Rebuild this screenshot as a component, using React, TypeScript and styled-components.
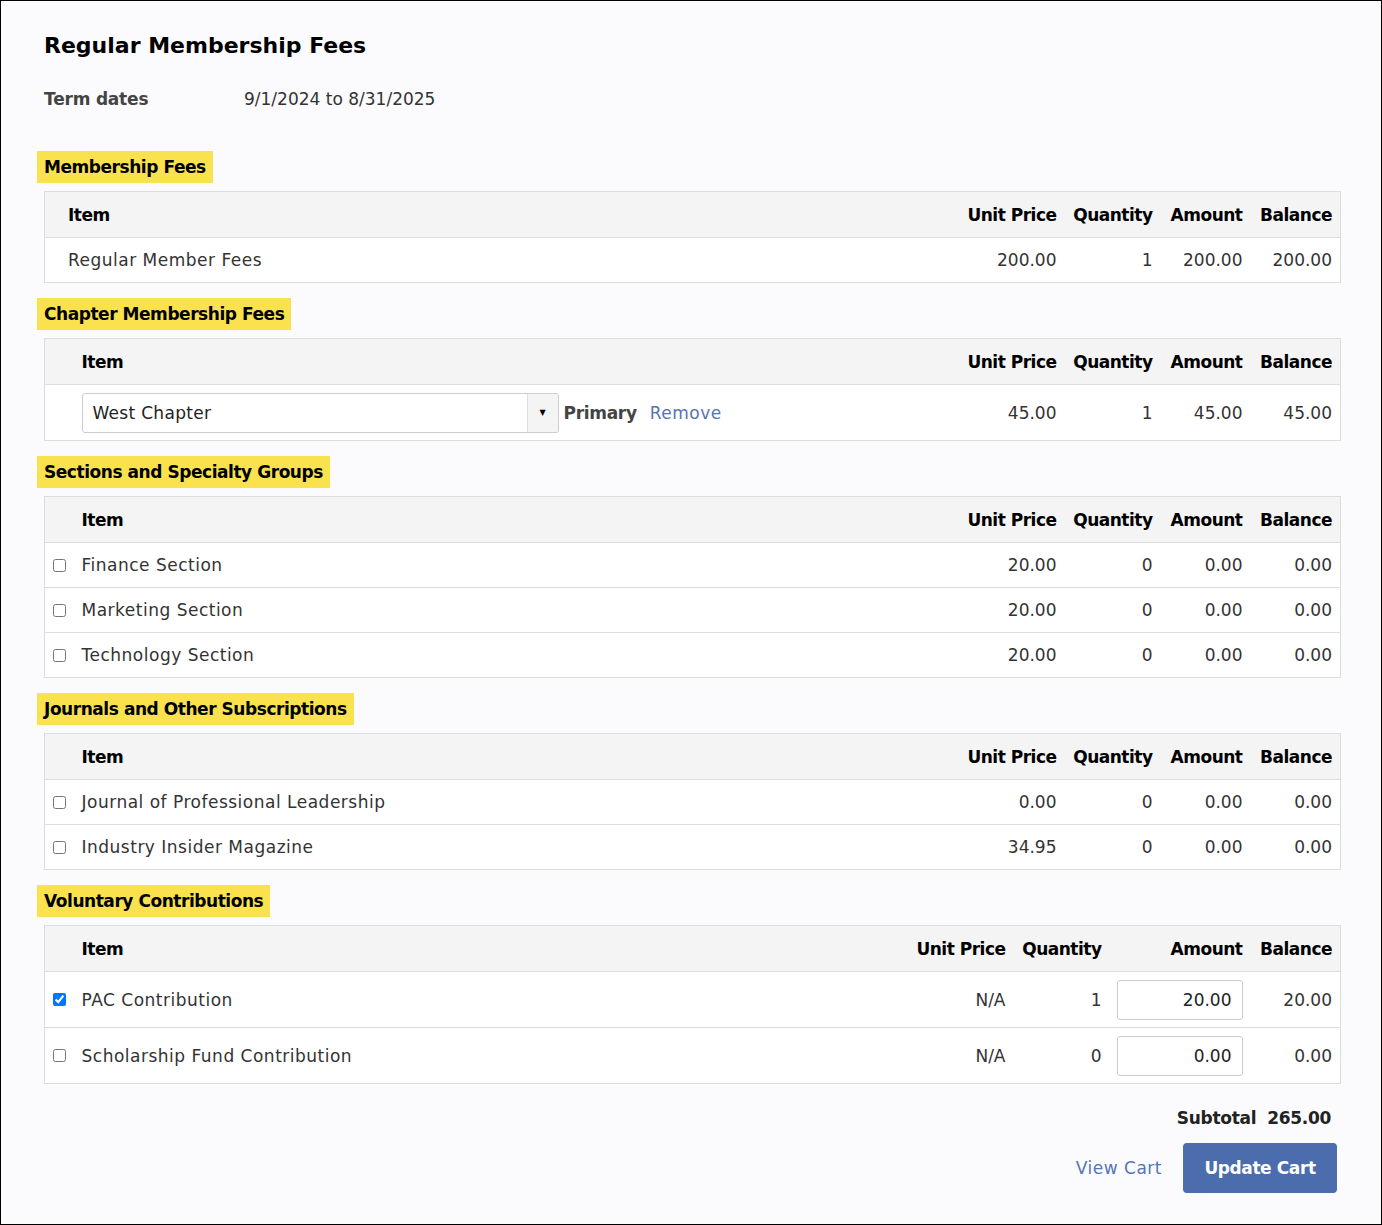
import styled, { createGlobalStyle } from "styled-components";
import { useState } from "react";

const GlobalStyle = createGlobalStyle`
  body {
    margin: 0;
    font-family: "DejaVu Sans", "Inter", "Liberation Sans", sans-serif;
    color: #333;
  }
  * { box-sizing: border-box; }
`;

const Frame = styled.div`
  border: 1px solid #000;
  min-height: 1225px;
  background: #fbfbfd;
  padding: 30px 40px 30px 43px;
`;

const Title = styled.h1`
  margin: 0;
  font-size: 22px;
  line-height: 30px;
  font-weight: 700;
  color: #000;
`;

const TermRow = styled.div`
  display: flex;
  margin-top: 25px;
  margin-bottom: 39px;
  font-size: 17px;
  line-height: 26px;
`;
const TermLabel = styled.div`
  width: 200px;
  font-weight: 700;
  letter-spacing: -0.2px;
  color: #444;
`;
const TermValue = styled.div`
  color: #333;
`;

const Section = styled.section`
  margin-top: 15px;
`;

const Heading = styled.h2`
  display: block;
  width: fit-content;
  margin: 0 0 8px -7px;
  padding: 0 7px;
  height: 32px;
  line-height: 32px;
  font-size: 17px;
  font-weight: 700;
  letter-spacing: -0.45px;
  color: #000;
  background: #f9e24e;
`;

const Table = styled.table`
  width: 100%;
  border-collapse: collapse;
  table-layout: fixed;
  border: 1px solid #ddd;
  background: #fff;
  font-size: 17px;
`;

const Th = styled.th<{ $w?: number; $left?: number; $last?: boolean }>`
  height: 46px;
  background: #f4f4f4;
  color: #000;
  font-weight: 700;
  letter-spacing: -0.5px;
  text-align: ${(p) => (p.$left !== undefined ? "left" : "right")};
  padding: 0 ${(p) => (p.$last ? 8 : 7)}px 0 ${(p) => p.$left ?? 0}px;
  border-bottom: 1px solid #ddd;
  white-space: nowrap;
  ${(p) => (p.$w ? `width: ${p.$w}px;` : "")}
`;

const Tr = styled.tr<{ $tall?: boolean }>`
  height: ${(p) => (p.$tall ? 56 : 45)}px;
  border-top: 1px solid #ddd;
`;

const Td = styled.td<{ $left?: number; $last?: boolean }>`
  text-align: ${(p) => (p.$left !== undefined ? "left" : "right")};
  padding: 0 ${(p) => (p.$last ? 8 : 7)}px 0 ${(p) => p.$left ?? 0}px;
  color: #333;
  white-space: nowrap;
  vertical-align: middle;
`;

const NameTd = styled(Td)`
  letter-spacing: 0.5px;
`;

const CheckCell = styled.td`
  padding: 0 0 0 8px;
  vertical-align: middle;
`;

const Check = styled.input`
  display: block;
  margin: 0;
  width: 13px;
  height: 13px;
`;

const ItemLine = styled.div`
  display: flex;
  align-items: center;
`;

const SelectWrap = styled.div`
  display: flex;
  width: 477px;
  height: 40px;
  border: 1px solid #ccc;
  border-radius: 3px;
  background: #fff;
  overflow: hidden;
`;

const Select = styled.select`
  flex: 1;
  border: 0;
  outline: none;
  appearance: none;
  background: transparent;
  font: inherit;
  font-size: 17px;
  letter-spacing: 0.3px;
  color: #222;
  padding: 0 10px;
`;

const Caret = styled.div`
  width: 31px;
  display: flex;
  align-items: center;
  justify-content: center;
  background: #f4f4f4;
  border-left: 1px solid #ddd;
  font-size: 8px;
  letter-spacing: 0;
  color: #000;
`;

const Primary = styled.span`
  margin-left: 5px;
  font-weight: 700;
  letter-spacing: -0.3px;
  color: #444;
`;

const LinkText = styled.a`
  color: #5674b4;
  text-decoration: none;
  letter-spacing: 0.5px;
  cursor: pointer;
`;

const RemoveLink = styled(LinkText)`
  margin-left: 13px;
`;

const AmountInput = styled.input`
  width: 126px;
  height: 40px;
  border: 1px solid #ccc;
  border-radius: 3px;
  font: inherit;
  font-size: 17px;
  color: #222;
  text-align: right;
  padding: 0 10px;
`;

const Footer = styled.div`
  display: flex;
  flex-direction: column;
  align-items: flex-end;
  padding-right: 4px;
  margin-top: 24px;
`;

const Subtotal = styled.div`
  display: flex;
  gap: 11px;
  font-size: 17px;
  font-weight: 700;
  letter-spacing: -0.3px;
  color: #222;
  padding-right: 6px;
`;

const Actions = styled.div`
  display: flex;
  align-items: center;
  gap: 21px;
  margin-top: 15px;
  font-size: 17px;
`;

const UpdateButton = styled.button`
  height: 50px;
  width: 154px;
  border: 0;
  border-radius: 4px;
  background: #4b6dad;
  color: #fff;
  font: inherit;
  font-size: 17px;
  font-weight: 700;
  letter-spacing: -0.4px;
  cursor: pointer;
`;

type Row = { name: string; price: string; qty: string; amount: string; balance: string };

const numCols = [
  { label: "Unit Price", w: 101 },
  { label: "Quantity", w: 96 },
  { label: "Amount", w: 90 },
  { label: "Balance", w: 91 },
];

const NumHeaders = ({ amountW = 90 }: { amountW?: number }) => (
  <>
    {numCols.map((c, i) => (
      <Th key={c.label} $w={c.label === "Amount" ? amountW : c.w} $last={i === 3}>
        {c.label}
      </Th>
    ))}
  </>
);

const NumCells = ({ r }: { r: Row }) => (
  <>
    <Td>{r.price}</Td>
    <Td>{r.qty}</Td>
    <Td>{r.amount}</Td>
    <Td $last>{r.balance}</Td>
  </>
);

const CheckTable = ({ rows }: { rows: Row[] }) => (
  <Table>
    <thead>
      <tr>
        <Th $w={37} $left={0}></Th>
        <Th $left={0}>Item</Th>
        <NumHeaders />
      </tr>
    </thead>
    <tbody>
      {rows.map((r) => (
        <Tr key={r.name}>
          <CheckCell>
            <Check type="checkbox" />
          </CheckCell>
          <NameTd $left={0}>{r.name}</NameTd>
          <NumCells r={r} />
        </Tr>
      ))}
    </tbody>
  </Table>
);

const sections: Row[] = [
  { name: "Finance Section", price: "20.00", qty: "0", amount: "0.00", balance: "0.00" },
  { name: "Marketing Section", price: "20.00", qty: "0", amount: "0.00", balance: "0.00" },
  { name: "Technology Section", price: "20.00", qty: "0", amount: "0.00", balance: "0.00" },
];

const journals: Row[] = [
  { name: "Journal of Professional Leadership", price: "0.00", qty: "0", amount: "0.00", balance: "0.00" },
  { name: "Industry Insider Magazine", price: "34.95", qty: "0", amount: "0.00", balance: "0.00" },
];

const App = () => {
  const [contrib, setContrib] = useState([
    { name: "PAC Contribution", checked: true, qty: "1", amount: "20.00" },
    { name: "Scholarship Fund Contribution", checked: false, qty: "0", amount: "0.00" },
  ]);

  const updateAmount = (i: number, value: string) => {
    setContrib((prev) => prev.map((c, j) => (j === i ? { ...c, amount: value } : c)));
  };

  return (
    <Frame>
      <GlobalStyle />
      <Title>Regular Membership Fees</Title>
      <TermRow>
        <TermLabel>Term dates</TermLabel>
        <TermValue>9/1/2024 to 8/31/2025</TermValue>
      </TermRow>

      <Section>
        <Heading>Membership Fees</Heading>
        <Table>
          <thead>
            <tr>
              <Th $left={23}>Item</Th>
              <NumHeaders />
            </tr>
          </thead>
          <tbody>
            <Tr>
              <NameTd $left={23}>Regular Member Fees</NameTd>
              <NumCells r={{ name: "", price: "200.00", qty: "1", amount: "200.00", balance: "200.00" }} />
            </Tr>
          </tbody>
        </Table>
      </Section>

      <Section>
        <Heading>Chapter Membership Fees</Heading>
        <Table>
          <thead>
            <tr>
              <Th $w={37} $left={0}></Th>
              <Th $left={0}>Item</Th>
              <NumHeaders />
            </tr>
          </thead>
          <tbody>
            <Tr $tall>
              <td></td>
              <Td $left={0}>
                <ItemLine>
                  <SelectWrap>
                    <Select defaultValue="west">
                      <option value="west">West Chapter</option>
                      <option value="east">East Chapter</option>
                    </Select>
                    <Caret>▼</Caret>
                  </SelectWrap>
                  <Primary>Primary</Primary>
                  <RemoveLink>Remove</RemoveLink>
                </ItemLine>
              </Td>
              <NumCells r={{ name: "", price: "45.00", qty: "1", amount: "45.00", balance: "45.00" }} />
            </Tr>
          </tbody>
        </Table>
      </Section>

      <Section>
        <Heading>Sections and Specialty Groups</Heading>
        <CheckTable rows={sections} />
      </Section>

      <Section>
        <Heading>Journals and Other Subscriptions</Heading>
        <CheckTable rows={journals} />
      </Section>

      <Section>
        <Heading>Voluntary Contributions</Heading>
        <Table>
          <thead>
            <tr>
              <Th $w={37} $left={0}></Th>
              <Th $left={0}>Item</Th>
              <NumHeaders amountW={141} />
            </tr>
          </thead>
          <tbody>
            {contrib.map((c, i) => (
              <Tr $tall key={c.name}>
                <CheckCell>
                  <Check type="checkbox" defaultChecked={c.checked} />
                </CheckCell>
                <NameTd $left={0}>{c.name}</NameTd>
                <Td>N/A</Td>
                <Td>{c.qty}</Td>
                <Td>
                  <AmountInput value={c.amount} onChange={(e) => updateAmount(i, e.target.value)} />
                </Td>
                <Td $last>{c.amount}</Td>
              </Tr>
            ))}
          </tbody>
        </Table>
      </Section>

      <Footer>
        <Subtotal>
          <span>Subtotal</span>
          <span>265.00</span>
        </Subtotal>
        <Actions>
          <LinkText>View Cart</LinkText>
          <UpdateButton>Update Cart</UpdateButton>
        </Actions>
      </Footer>
    </Frame>
  );
};

export default App;
